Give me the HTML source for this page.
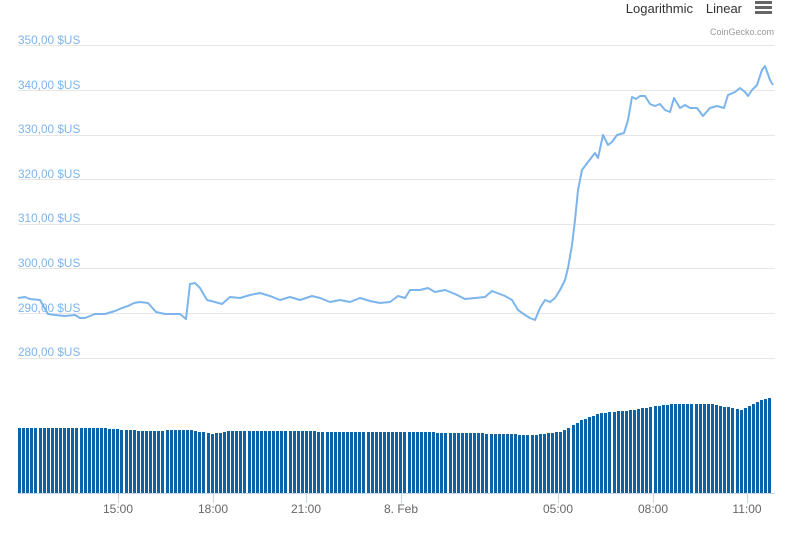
<!DOCTYPE html>
<html><head><meta charset="utf-8"><style>
body{margin:0;background:#fff;width:790px;height:533px;overflow:hidden;font-family:"Liberation Sans",sans-serif}
</style></head><body>
<svg id="s" width="790" height="533" xmlns="http://www.w3.org/2000/svg" style="position:absolute;left:0;top:0">
<g stroke="#e6e6e6" stroke-width="1">
<line x1="18" x2="775" y1="45.5" y2="45.5"/><line x1="18" x2="775" y1="90.5" y2="90.5"/>
<line x1="18" x2="775" y1="135.5" y2="135.5"/><line x1="18" x2="775" y1="179.5" y2="179.5"/>
<line x1="18" x2="775" y1="224.5" y2="224.5"/><line x1="18" x2="775" y1="268.5" y2="268.5"/>
<line x1="18" x2="775" y1="313.5" y2="313.5"/><line x1="18" x2="775" y1="358.5" y2="358.5"/>
</g>
<g fill="#7cb5ec" font-size="11.8">
<text x="18" y="44">350,00 $US</text><text x="18" y="89">340,00 $US</text>
<text x="18" y="133">330,00 $US</text><text x="18" y="178">320,00 $US</text>
<text x="18" y="222">310,00 $US</text><text x="18" y="267">300,00 $US</text>
<text x="18" y="312">290,00 $US</text><text x="18" y="356">280,00 $US</text>
</g>
<g id="bars" fill="#0d63a5"></g>
<line x1="18" x2="775" y1="493.5" y2="493.5" stroke="#ccd6eb"/>
<g stroke="#ccd6eb"><line x1="118.5" x2="118.5" y1="493" y2="503"/><line x1="213.5" x2="213.5" y1="493" y2="503"/><line x1="306.5" x2="306.5" y1="493" y2="503"/><line x1="401.5" x2="401.5" y1="493" y2="503"/><line x1="558.5" x2="558.5" y1="493" y2="503"/><line x1="653.5" x2="653.5" y1="493" y2="503"/><line x1="747.5" x2="747.5" y1="493" y2="503"/></g>
<g fill="#666" font-size="12" text-anchor="middle">
<text x="118" y="513">15:00</text><text x="213" y="513">18:00</text><text x="306" y="513">21:00</text><text x="401" y="513">8. Feb</text><text x="558" y="513">05:00</text><text x="653" y="513">08:00</text><text x="747" y="513">11:00</text>
</g>
<path fill="none" stroke="#7cb5ec" stroke-width="2" stroke-linejoin="round" d="M18,298 L25,297 30,299 40,300 48,314 55,315 65,316 75,315 80,318 85,318 95,314 105,314 115,311 122,308 128,306 134,303 140,302 148,303 156,312 165,314 172,314 180,314 186,319 190,284 195,283 200,288 207,300 215,302 222,304 230,297 240,298 250,295 260,293 270,296 280,300 290,297 300,300 312,296 320,298 330,302 340,300 350,302 360,298 370,301 380,303 390,302 398,296 405,298 410,290 420,290 428,288 435,292 445,290 455,294 465,299 475,298 485,297 492,291 497,293 505,296 512,300 518,310 525,315 530,318 535,320 540,308 545,300 550,302 555,298 560,290 565,280 568,268 572,245 575,220 578,190 582,170 588,162 595,153 598,158 603,135 608,145 612,142 617,135 624,133 628,120 632,97 636,99 640,96 645,96 650,104 655,106 660,104 665,110 670,112 674,98 680,108 685,105 690,108 697,108 703,116 710,108 717,106 724,108 728,95 735,92 740,88 745,92 748,96 752,90 757,85 762,70 765,66 770,80 773,85"/>
<text x="742" y="13" font-size="13" fill="#333" text-anchor="end">Linear</text>
<text x="693" y="13" font-size="13" fill="#333" text-anchor="end">Logarithmic</text>
<g fill="#666"><rect x="755" y="1" width="17" height="3"/><rect x="755" y="6" width="17" height="3"/><rect x="755" y="11" width="17" height="3"/></g>
<text x="774" y="35" font-size="9" fill="#999" text-anchor="end">CoinGecko.com</text>
</svg>
<script>
var k=[[18,428],[100,428],[140,431],[190,430],[210,434],[230,431],[400,432],[470,433],[530,435],[560,432],[580,420],[600,413],[630,410],[670,404],[710,404],[740,410],[760,400],[774,397]];
function f(x){for(var i=1;i<k.length;i++){if(x<=k[i][0]){var a=k[i-1],b=k[i];return a[1]+(b[1]-a[1])*(x-a[0])/(b[0]-a[0]);}}return 397;}
var g=document.getElementById('bars'),h='';
for(var x=18;x<772;x+=4.1){var t=Math.round(f(x));h+='<rect x="'+Math.round(x)+'" y="'+t+'" width="3" height="'+(493-t)+'"/>';}
g.innerHTML=h;
</script>
</body></html>
